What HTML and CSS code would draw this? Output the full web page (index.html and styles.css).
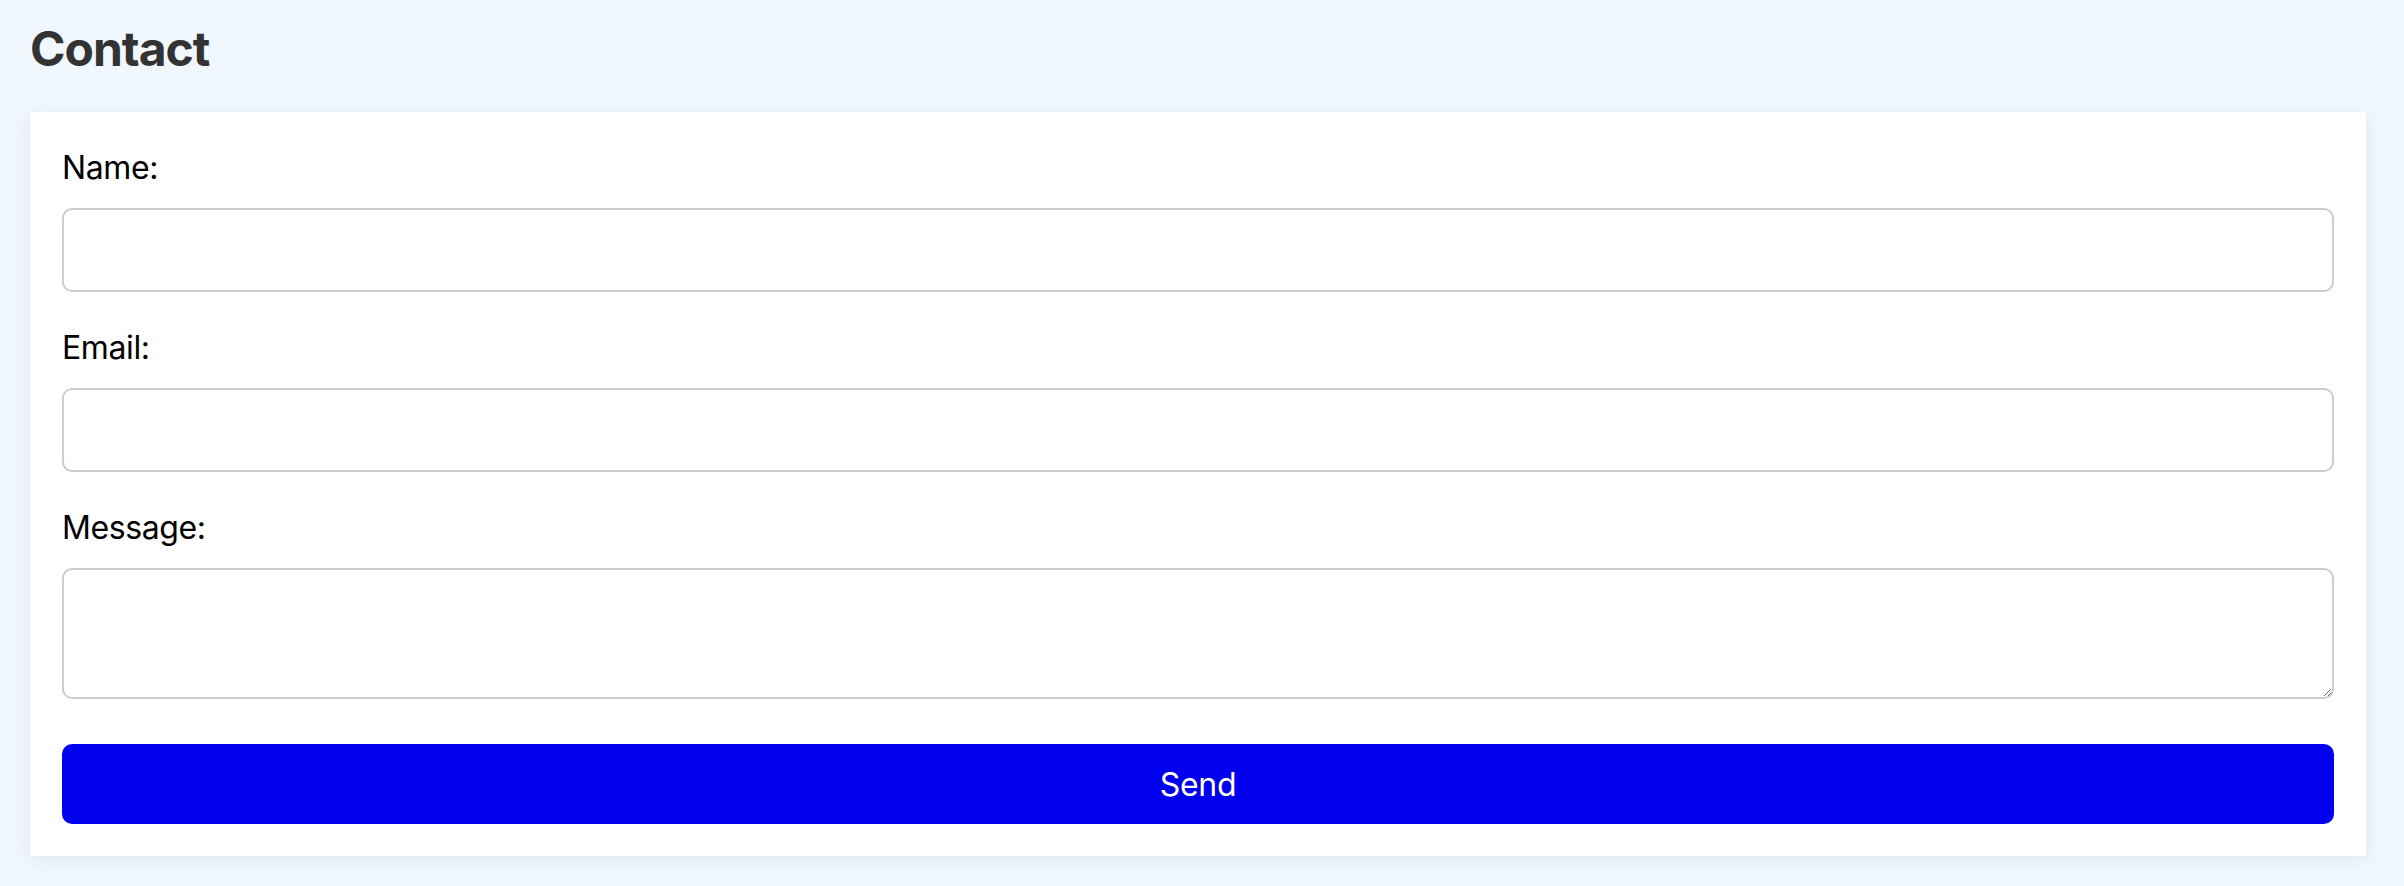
FILE: index.html
```html
<!DOCTYPE html>
<html lang="en">
<head>
<meta charset="utf-8">
<title>Contact</title>
<link rel="stylesheet" href="styles.css">
</head>
<body>
<h1 class="title">Contact</h1>
<form class="card">
  <label class="label" for="name">Name:</label>
  <input class="field" id="name" type="text">
  <label class="label" for="email">Email:</label>
  <input class="field" id="email" type="email">
  <label class="label" for="message">Message:</label>
  <textarea class="area" id="message"></textarea>
  <button class="send" type="button">Send</button>
</form>
</body>
</html>
```
FILE: styles.css
```css
html, body {
  margin: 0;
  background: #f0f7ff;
}
body {
  padding: 20px 38px 30px 30px;
  font-family: Inter, "Noto Sans", sans-serif;
}
.title {
  margin: 0 0 34px 0;
  font-size: 48px;
  line-height: 58px;
  font-weight: 700;
  letter-spacing: -1px;
  color: #333333;
}
.card {
  display: flex;
  flex-direction: column;
  background: #ffffff;
  padding: 37px 32px 32px 32px;
  box-shadow: 0 4px 20px rgba(0, 0, 0, 0.07);
}
.label {
  display: block;
  font-size: 32px;
  line-height: 38px;
  letter-spacing: -0.4px;
  color: #000000;
  margin-bottom: 21px;
}
.field, .area {
  display: block;
  box-sizing: border-box;
  width: 100%;
  border: 2px solid #cccccc;
  border-radius: 10px;
  background: #ffffff;
  font-family: inherit;
  font-size: 32px;
  padding: 10px 16px;
  margin: 0 0 37px 0;
}
.field {
  height: 84px;
}
.area {
  height: 131px;
  margin-bottom: 45px;
  resize: vertical;
}
.send {
  display: block;
  width: 100%;
  height: 80px;
  border: none;
  border-radius: 10px;
  background: #0000ee;
  color: #ffffff;
  font-family: inherit;
  font-size: 32px;
  letter-spacing: -0.3px;
  cursor: pointer;
}
```
